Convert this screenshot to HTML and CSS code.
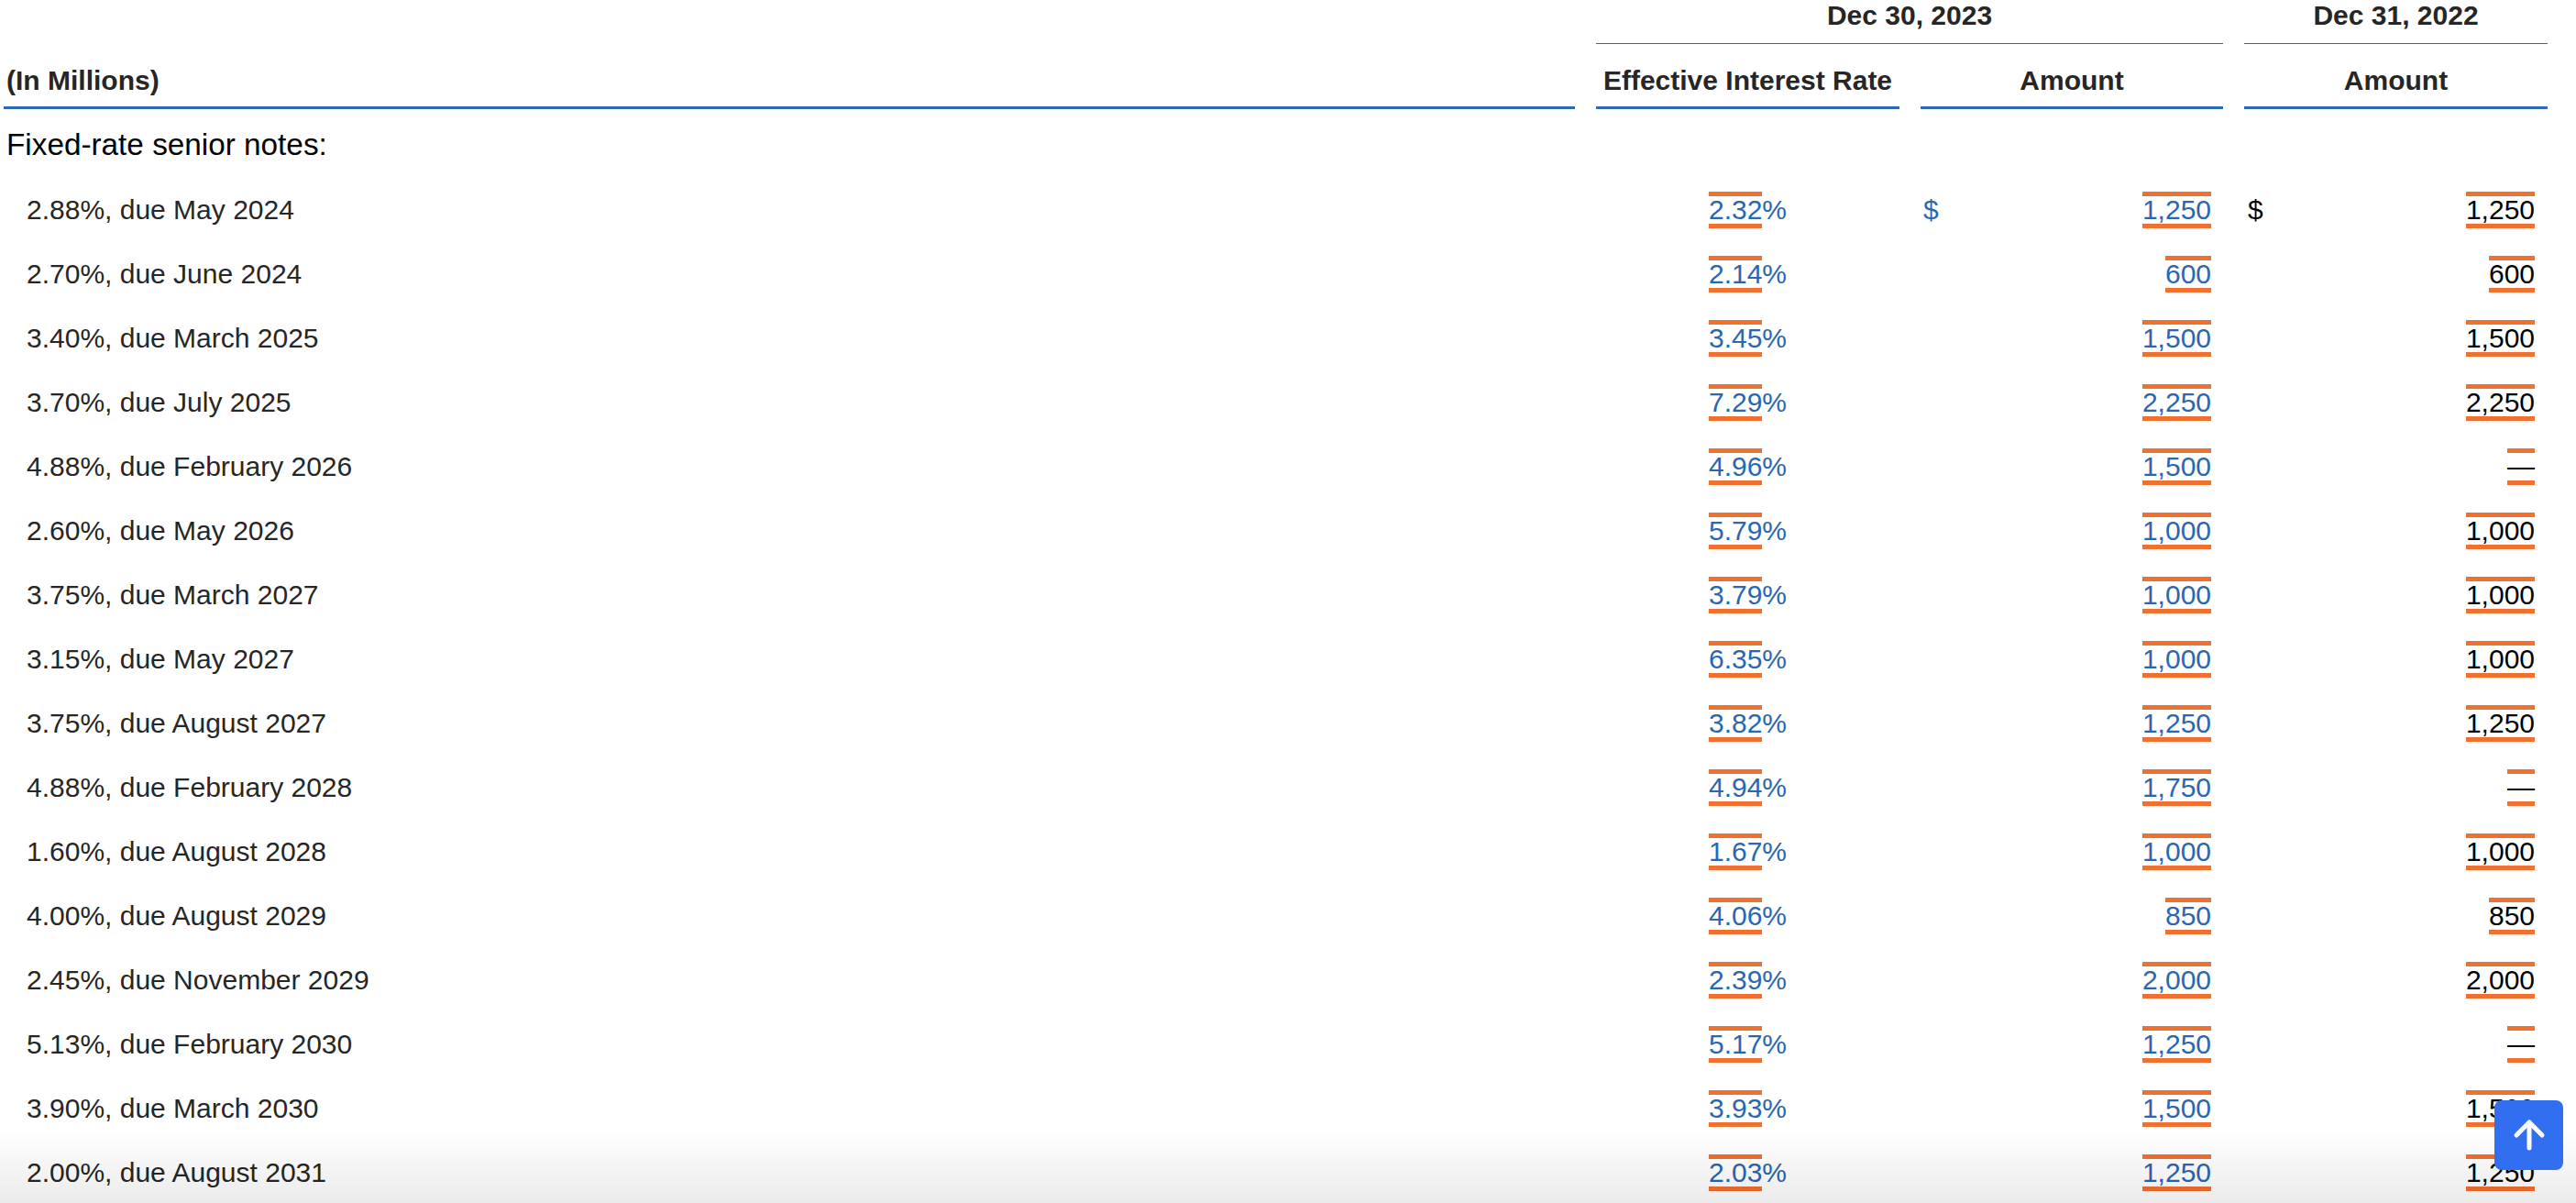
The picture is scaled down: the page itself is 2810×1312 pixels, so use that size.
FILE: index.html
```html
<!DOCTYPE html>
<html lang="en">
<head>
<meta charset="utf-8">
<title>Fixed-rate senior notes</title>
<link rel="stylesheet" href="styles.css">
</head>
<body>
<table class="debt">
<colgroup>
<col class="c-label"><col class="c-gap"><col class="c-rate"><col class="c-gap"><col class="c-amt"><col class="c-gap"><col class="c-rate">
</colgroup>
<thead>
<tr class="head-top">
<th></th><th></th>
<th colspan="3" class="span-line">Dec 30, 2023</th>
<th></th>
<th class="span-line">Dec 31, 2022</th>
</tr>
<tr class="head-main">
<th class="head-label">(In Millions)</th><th class="no-line"></th>
<th>Effective Interest Rate</th><th class="no-line"></th>
<th>Amount</th><th class="no-line"></th>
<th>Amount</th>
</tr>
</thead>
<tbody>
<tr class="section"><td colspan="7">Fixed-rate senior notes:</td></tr>
<tr><td class="label">2.88%, due May 2024</td><td></td><td><div class="rate cur"><span class="tag">2.32</span>%</div></td><td></td><td><div class="amt cur"><span>$</span><span class="tag">1,250</span></div></td><td></td><td><div class="amt prior"><span>$</span><span class="tag">1,250</span></div></td></tr>
<tr><td class="label">2.70%, due June 2024</td><td></td><td><div class="rate cur"><span class="tag">2.14</span>%</div></td><td></td><td><div class="amt cur"><span></span><span class="tag">600</span></div></td><td></td><td><div class="amt prior"><span></span><span class="tag">600</span></div></td></tr>
<tr><td class="label">3.40%, due March 2025</td><td></td><td><div class="rate cur"><span class="tag">3.45</span>%</div></td><td></td><td><div class="amt cur"><span></span><span class="tag">1,500</span></div></td><td></td><td><div class="amt prior"><span></span><span class="tag">1,500</span></div></td></tr>
<tr><td class="label">3.70%, due July 2025</td><td></td><td><div class="rate cur"><span class="tag">7.29</span>%</div></td><td></td><td><div class="amt cur"><span></span><span class="tag">2,250</span></div></td><td></td><td><div class="amt prior"><span></span><span class="tag">2,250</span></div></td></tr>
<tr><td class="label">4.88%, due February 2026</td><td></td><td><div class="rate cur"><span class="tag">4.96</span>%</div></td><td></td><td><div class="amt cur"><span></span><span class="tag">1,500</span></div></td><td></td><td><div class="amt prior"><span></span><span class="tag">—</span></div></td></tr>
<tr><td class="label">2.60%, due May 2026</td><td></td><td><div class="rate cur"><span class="tag">5.79</span>%</div></td><td></td><td><div class="amt cur"><span></span><span class="tag">1,000</span></div></td><td></td><td><div class="amt prior"><span></span><span class="tag">1,000</span></div></td></tr>
<tr><td class="label">3.75%, due March 2027</td><td></td><td><div class="rate cur"><span class="tag">3.79</span>%</div></td><td></td><td><div class="amt cur"><span></span><span class="tag">1,000</span></div></td><td></td><td><div class="amt prior"><span></span><span class="tag">1,000</span></div></td></tr>
<tr><td class="label">3.15%, due May 2027</td><td></td><td><div class="rate cur"><span class="tag">6.35</span>%</div></td><td></td><td><div class="amt cur"><span></span><span class="tag">1,000</span></div></td><td></td><td><div class="amt prior"><span></span><span class="tag">1,000</span></div></td></tr>
<tr><td class="label">3.75%, due August 2027</td><td></td><td><div class="rate cur"><span class="tag">3.82</span>%</div></td><td></td><td><div class="amt cur"><span></span><span class="tag">1,250</span></div></td><td></td><td><div class="amt prior"><span></span><span class="tag">1,250</span></div></td></tr>
<tr><td class="label">4.88%, due February 2028</td><td></td><td><div class="rate cur"><span class="tag">4.94</span>%</div></td><td></td><td><div class="amt cur"><span></span><span class="tag">1,750</span></div></td><td></td><td><div class="amt prior"><span></span><span class="tag">—</span></div></td></tr>
<tr><td class="label">1.60%, due August 2028</td><td></td><td><div class="rate cur"><span class="tag">1.67</span>%</div></td><td></td><td><div class="amt cur"><span></span><span class="tag">1,000</span></div></td><td></td><td><div class="amt prior"><span></span><span class="tag">1,000</span></div></td></tr>
<tr><td class="label">4.00%, due August 2029</td><td></td><td><div class="rate cur"><span class="tag">4.06</span>%</div></td><td></td><td><div class="amt cur"><span></span><span class="tag">850</span></div></td><td></td><td><div class="amt prior"><span></span><span class="tag">850</span></div></td></tr>
<tr><td class="label">2.45%, due November 2029</td><td></td><td><div class="rate cur"><span class="tag">2.39</span>%</div></td><td></td><td><div class="amt cur"><span></span><span class="tag">2,000</span></div></td><td></td><td><div class="amt prior"><span></span><span class="tag">2,000</span></div></td></tr>
<tr><td class="label">5.13%, due February 2030</td><td></td><td><div class="rate cur"><span class="tag">5.17</span>%</div></td><td></td><td><div class="amt cur"><span></span><span class="tag">1,250</span></div></td><td></td><td><div class="amt prior"><span></span><span class="tag">—</span></div></td></tr>
<tr><td class="label">3.90%, due March 2030</td><td></td><td><div class="rate cur"><span class="tag">3.93</span>%</div></td><td></td><td><div class="amt cur"><span></span><span class="tag">1,500</span></div></td><td></td><td><div class="amt prior"><span></span><span class="tag">1,500</span></div></td></tr>
<tr><td class="label">2.00%, due August 2031</td><td></td><td><div class="rate cur"><span class="tag">2.03</span>%</div></td><td></td><td><div class="amt cur"><span></span><span class="tag">1,250</span></div></td><td></td><td><div class="amt prior"><span></span><span class="tag">1,250</span></div></td></tr>
</tbody>
</table>
<div class="fade"></div>
<button class="to-top" type="button" aria-label="Back to top">
<svg viewBox="0 0 24 24" width="48" height="48" fill="none" stroke="#fff" stroke-width="2.5" stroke-linecap="round" stroke-linejoin="round"><path d="M12 19V5"/><path d="M5 12l7-7 7 7"/></svg>
</button>
</body>
</html>
```
FILE: styles.css
```css
html, body {
  height: 100%;
  margin: 0;
  overflow: hidden;
  background: #fff;
}
body {
  font-family: "Liberation Sans", Arial, sans-serif;
  font-size: 30px;
  color: #262626;
  padding-left: 4px;
  box-sizing: border-box;
}
.debt {
  table-layout: fixed;
  width: 2775px;
  border-collapse: separate;
  border-spacing: 0;
}
.c-label { width: 1714px; }
.c-gap { width: 23px; }
.c-rate { width: 331px; }
.c-amt { width: 330px; }
.debt th, .debt td { padding: 0; }
.debt th {
  font-weight: 700;
  text-align: center;
  line-height: 34px;
}
.head-top th {
  height: 47px;
  vertical-align: top;
}
.head-top .span-line { border-bottom: 1px solid #2e68b0; }
.head-main th {
  vertical-align: bottom;
  padding-bottom: 11px;
  height: 57px;
  border-bottom: 3px solid #2e68b0;
}
.head-main .no-line { border-bottom: 0; }
.head-main .head-label {
  text-align: left;
  padding-left: 3px;
}
.section td {
  height: 73px;
  font-size: 33.3px;
  color: #000;
  padding: 2px 0 0 3px;
  vertical-align: middle;
}
tbody tr { height: 70px; }
.debt .label {
  padding-left: 25px;
  line-height: 30px;
}
.rate {
  display: flex;
  justify-content: center;
  align-items: center;
  line-height: 30px;
}
.amt {
  display: flex;
  justify-content: space-between;
  align-items: center;
  line-height: 30px;
  padding: 0 13px 0 3px;
}
.cur { color: #2a66b1; }
.prior {
  color: #000;
  padding: 0 14px 0 4px;
}
.tag {
  display: block;
  height: 30px;
  border-top: 5px solid #f07030;
  border-bottom: 5px solid #f07030;
}
.fade {
  position: fixed;
  left: 0;
  right: 0;
  bottom: 0;
  height: 80px;
  background: linear-gradient(to bottom, rgba(0,0,0,0), rgba(0,0,0,0.08));
  pointer-events: none;
}
.to-top {
  position: fixed;
  right: 14px;
  bottom: 36px;
  width: 75px;
  height: 76px;
  border: 0;
  padding: 0;
  border-radius: 8px;
  background: #316ff0;
  display: flex;
  align-items: center;
  justify-content: center;
}
```
